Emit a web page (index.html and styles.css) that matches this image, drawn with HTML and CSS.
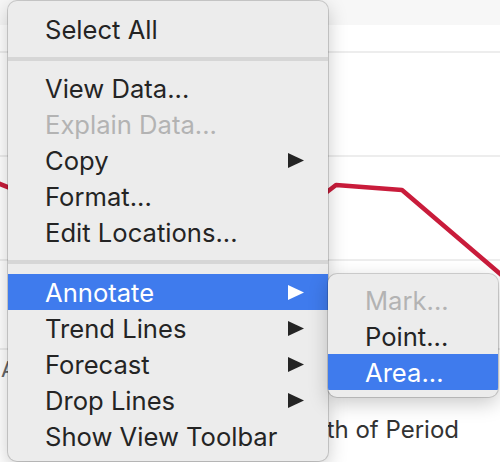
FILE: index.html
```html
<!DOCTYPE html>
<html>
<head>
<meta charset="utf-8">
<link rel="stylesheet" href="styles.css">
</head>
<body>
<div class="stage">
  <svg class="chart" width="500" height="462" viewBox="0 0 500 462">
    <rect x="0" y="0" width="500" height="25" fill="#f7f7f7"/>
    <rect x="0" y="51" width="500" height="2" fill="#ededed"/>
    <rect x="0" y="155" width="500" height="2" fill="#ededed"/>
    <rect x="0" y="259" width="500" height="2" fill="#ededed"/>
    <rect x="0" y="348" width="500" height="2" fill="#ededed"/>
    <polyline points="-20,176 40,200 310,205 336,185 402,190 505,278" fill="none" stroke="#c91c3b" stroke-width="4.5" stroke-linejoin="round"/>
  </svg>
  <div class="axis-a">A</div>
  <div class="axis-title">Month of Period</div>

  <div class="menu main">
    <div class="row">Select All</div>
    <div class="sep"></div>
    <div class="row">View Data...</div>
    <div class="row disabled">Explain Data...</div>
    <div class="row">Copy<svg class="arrow" width="16" height="15" viewBox="0 0 16 15"><path d="M0 0 L16 7.5 L0 15 Z"/></svg></div>
    <div class="row">Format...</div>
    <div class="row">Edit Locations...</div>
    <div class="sep"></div>
    <div class="row active">Annotate<svg class="arrow" width="16" height="15" viewBox="0 0 16 15"><path d="M0 0 L16 7.5 L0 15 Z"/></svg></div>
    <div class="row">Trend Lines<svg class="arrow" width="16" height="15" viewBox="0 0 16 15"><path d="M0 0 L16 7.5 L0 15 Z"/></svg></div>
    <div class="row">Forecast<svg class="arrow" width="16" height="15" viewBox="0 0 16 15"><path d="M0 0 L16 7.5 L0 15 Z"/></svg></div>
    <div class="row">Drop Lines<svg class="arrow" width="16" height="15" viewBox="0 0 16 15"><path d="M0 0 L16 7.5 L0 15 Z"/></svg></div>
    <div class="row">Show View Toolbar</div>
  </div>

  <div class="menu sub">
    <div class="row disabled">Mark...</div>
    <div class="row">Point...</div>
    <div class="row active">Area...</div>
  </div>
</div>
</body>
</html>
```

FILE: styles.css
```css
html, body {
  margin: 0;
  padding: 0;
  background: #ffffff;
}
.stage {
  position: relative;
  width: 500px;
  height: 462px;
  overflow: hidden;
  background: #ffffff;
  font-family: "Inter", "Noto Sans", sans-serif;
}
.chart {
  position: absolute;
  left: 0;
  top: 0;
}
.axis-a {
  position: absolute;
  left: 1px;
  top: 356px;
  font-size: 22px;
  color: #666;
  line-height: 26px;
}
.axis-title {
  position: absolute;
  right: 41px;
  top: 416px;
  font-size: 24px;
  line-height: 28px;
  color: #333333;
  white-space: nowrap;
}
.menu {
  position: absolute;
  background: #ececec;
  border-radius: 9px;
  box-shadow: 0 0 0 1px rgba(0,0,0,0.16), 0 6px 20px rgba(0,0,0,0.22);
  overflow: hidden;
  display: flex;
  flex-direction: column;
}
.main {
  left: 8px;
  top: 1px;
  width: 320px;
  padding: 10px 0 7px;
}
.sub {
  left: 328px;
  top: 274px;
  width: 170px;
  padding: 8px 0 7px;
}
.row {
  height: 36px;
  padding: 0 24px 0 37px;
  display: flex;
  align-items: center;
  justify-content: space-between;
  font-size: 25.6px;
  color: #242424;
  white-space: nowrap;
}
.row.disabled {
  color: #b3b3b3;
}
.row.active {
  background: #3f7bed;
  color: #ffffff;
}
.arrow {
  fill: #242424;
  flex: none;
}
.row.active .arrow {
  fill: #ffffff;
}
.sep {
  height: 4px;
  background: #d6d6d6;
  margin: 9.5px 0 10px;
}
```
